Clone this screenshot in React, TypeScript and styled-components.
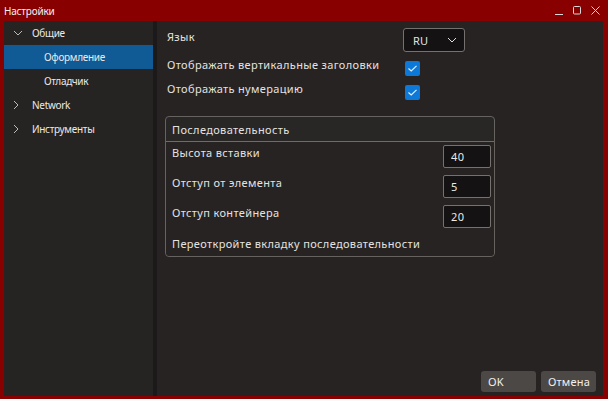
import React, { useState } from "react";
import styled, { createGlobalStyle } from "styled-components";

const GlobalStyle = createGlobalStyle`
  html, body {
    margin: 0;
    padding: 0;
    background: #880000;
  }
  body {
    font-family: "Noto Sans", "Open Sans", sans-serif;
    font-size: 11px;
    letter-spacing: 0.35px;
    color: #e4e2e0;
  }
  * {
    box-sizing: border-box;
  }
`;

const Window = styled.div`
  width: 608px;
  height: 399px;
  display: flex;
  flex-direction: column;
  background: #880000;
  padding: 0 5px 3px 4px;
`;

const TitleBar = styled.div`
  height: 21px;
  flex: 0 0 21px;
  display: flex;
  align-items: center;
  color: #f2f2f2;
  font-size: 10px;
  letter-spacing: -0.2px;
`;

const TitleText = styled.span`
  flex: 1;
`;

const TitleButtons = styled.div`
  display: flex;
  align-items: center;
  gap: 10px;
  margin-right: 3px;
  color: #d8d8d8;
`;

const Body = styled.div`
  flex: 1;
  display: flex;
  min-height: 0;
`;

const Sidebar = styled.div`
  width: 149px;
  flex: 0 0 149px;
  background: #262323;
  display: flex;
  flex-direction: column;
  font-size: 10px;
  letter-spacing: -0.3px;
`;

const Splitter = styled.div`
  width: 4px;
  flex: 0 0 4px;
  background: #1b1919;
`;

const TreeRow = styled.div<{ $level: number; $selected?: boolean }>`
  height: 24px;
  display: flex;
  align-items: center;
  padding-left: ${p => (p.$level === 0 ? 9 : 40)}px;
  background: ${p => (p.$selected ? "#105a96" : "transparent")};
  color: #ece9e6;
  white-space: nowrap;
`;

const Arrow = styled.span`
  width: 19px;
  display: flex;
  align-items: center;
  justify-content: flex-start;
  color: #bdbab8;
`;

const Content = styled.div`
  flex: 1;
  background: #262322;
  display: flex;
  flex-direction: column;
  padding: 7px 7px 4px 8px;
`;

const Form = styled.div`
  display: grid;
  grid-template-columns: 236px auto;
  grid-template-rows: 28px 24px 24px;
  padding-left: 2px;
`;

const Label = styled.div`
  padding-top: 2px;
  line-height: 14px;
  white-space: nowrap;
`;

const Combo = styled.div`
  width: 62px;
  height: 24px;
  background: #141212;
  border: 1px solid #75716e;
  border-radius: 3px;
  display: flex;
  align-items: center;
  justify-content: space-between;
  padding: 0 7px 0 9px;
  letter-spacing: 0.2px;
`;

const CheckCell = styled.div`
  display: flex;
  align-items: center;
  padding-left: 2px;
`;

const CheckBox = styled.div`
  width: 15px;
  height: 15px;
  border-radius: 2px;
  background: #0c78d7;
  display: flex;
  align-items: center;
  justify-content: center;
`;

const Group = styled.div`
  margin-top: 12px;
  width: 330px;
  border: 1px solid #66625f;
  border-radius: 4px;
  background: #292626;
`;

const GroupHeader = styled.div`
  height: 25px;
  display: flex;
  align-items: center;
  padding-left: 6px;
  border-bottom: 1px solid #6f6b68;
`;

const GroupBody = styled.div`
  display: flex;
  flex-direction: column;
  gap: 7px;
  padding: 3px 3px 5px 6px;
  background: #262322;
  border-radius: 0 0 4px 4px;
`;

const FieldRow = styled.div`
  display: flex;
  align-items: flex-start;
  justify-content: space-between;
`;

const FieldLabel = styled.div`
  padding-top: 1px;
  line-height: 14px;
`;

const NumberInput = styled.input`
  width: 48px;
  height: 23px;
  background: #141212;
  border: 1px solid #75716e;
  border-radius: 2px;
  color: #eceae8;
  font-family: inherit;
  font-size: 11px;
  letter-spacing: 0.35px;
  padding: 0 0 0 7px;
  outline: none;
`;

const Note = styled.div`
  padding-top: 2px;
  line-height: 14px;
  white-space: nowrap;
`;

const Spacer = styled.div`
  flex: 1;
`;

const Footer = styled.div`
  display: flex;
  justify-content: flex-end;
  gap: 5px;
`;

const Button = styled.button`
  min-width: 55px;
  height: 21px;
  border: none;
  border-radius: 3px;
  background: #4c4846;
  color: #f2f0ee;
  font-family: inherit;
  font-size: 11px;
  letter-spacing: 0.2px;
  text-align: left;
  padding: 0 6px 0 7px;
`;

function Chevron({ open }: { open?: boolean }) {
  return open ? (
    <svg width="10" height="6" viewBox="0 0 10 6">
      <path d="M1 1 L5 5 L9 1" fill="none" stroke="currentColor" strokeWidth="1" />
    </svg>
  ) : (
    <svg width="6" height="10" viewBox="0 0 6 10">
      <path d="M1 1 L5 5 L1 9" fill="none" stroke="currentColor" strokeWidth="1" />
    </svg>
  );
}

function Check() {
  return (
    <svg width="11" height="9" viewBox="0 0 11 9">
      <path d="M1.5 4.5 L4.2 7 L9.5 1.8" fill="none" stroke="#e8f2fb" strokeWidth="1.1" />
    </svg>
  );
}

const tree = [
  { label: "Общие", level: 0, arrow: "open" },
  { label: "Оформление", level: 1, selected: true },
  { label: "Отладчик", level: 1 },
  { label: "Network", level: 0, arrow: "closed" },
  { label: "Инструменты", level: 0, arrow: "closed" }
];

const fields = [
  { label: "Высота вставки", value: "40" },
  { label: "Отступ от элемента", value: "5" },
  { label: "Отступ контейнера", value: "20" }
];

export default function App() {
  const [values, setValues] = useState(fields.map(f => f.value));

  return (
    <>
      <GlobalStyle />
      <Window>
        <TitleBar>
          <TitleText>Настройки</TitleText>
          <TitleButtons>
            <svg width="8" height="9" viewBox="0 0 8 9">
              <path d="M0 8.5 H8" stroke="currentColor" strokeWidth="1" />
            </svg>
            <svg width="8" height="9" viewBox="0 0 8 9">
              <rect x="0.5" y="0.5" width="7" height="7.5" rx="1" fill="none" stroke="currentColor" strokeWidth="1" />
            </svg>
            <svg width="9" height="9" viewBox="0 0 9 9">
              <path d="M0.5 0.5 L8.5 8.5 M8.5 0.5 L0.5 8.5" stroke="currentColor" strokeWidth="1" />
            </svg>
          </TitleButtons>
        </TitleBar>
        <Body>
          <Sidebar>
            {tree.map(item => (
              <TreeRow key={item.label} $level={item.level} $selected={item.selected}>
                {item.level === 0 && (
                  <Arrow>
                    <Chevron open={item.arrow === "open"} />
                  </Arrow>
                )}
                {item.label}
              </TreeRow>
            ))}
          </Sidebar>
          <Splitter />
          <Content>
            <Form>
              <Label>Язык</Label>
              <div>
                <Combo>
                  RU
                  <Chevron open />
                </Combo>
              </div>
              <Label>Отображать вертикальные заголовки</Label>
              <CheckCell>
                <CheckBox>
                  <Check />
                </CheckBox>
              </CheckCell>
              <Label>Отображать нумерацию</Label>
              <CheckCell>
                <CheckBox>
                  <Check />
                </CheckBox>
              </CheckCell>
            </Form>
            <Group>
              <GroupHeader>Последовательность</GroupHeader>
              <GroupBody>
                {fields.map((f, i) => (
                  <FieldRow key={f.label}>
                    <FieldLabel>{f.label}</FieldLabel>
                    <NumberInput
                      value={values[i]}
                      onChange={e => {
                        const next = values.slice();
                        next[i] = e.target.value;
                        setValues(next);
                      }}
                    />
                  </FieldRow>
                ))}
                <Note>Переоткройте вкладку последовательности</Note>
              </GroupBody>
            </Group>
            <Spacer />
            <Footer>
              <Button>OK</Button>
              <Button>Отмена</Button>
            </Footer>
          </Content>
        </Body>
      </Window>
    </>
  );
}
